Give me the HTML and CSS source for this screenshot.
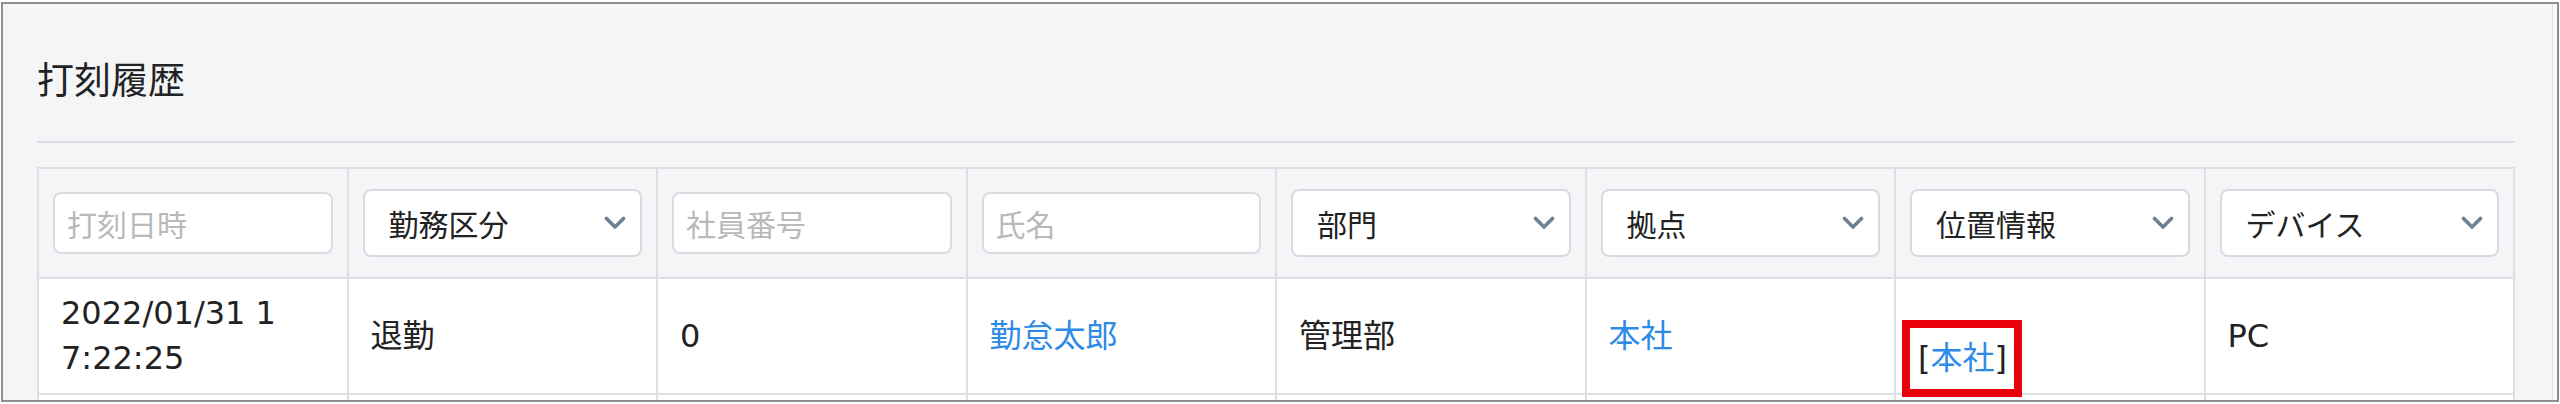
FILE: index.html
```html
<!DOCTYPE html>
<html lang="ja">
<head>
<meta charset="utf-8">
<title>打刻履歴</title>
<link rel="stylesheet" href="styles.css">
</head>
<body>
<div class="frame">
  <div class="panel">
    <div class="panel-head">
      <h2 class="title">打刻履歴</h2>
    </div>
    <table class="grid">
      <thead>
        <tr>
          <th><input class="field" type="text" placeholder="打刻日時"></th>
          <th><div class="select"><span class="select-label">勤務区分</span><svg class="chev" viewBox="0 0 22 14" width="22" height="14"><polyline points="2.5,2.5 11,11 19.5,2.5"/></svg></div></th>
          <th><input class="field" type="text" placeholder="社員番号"></th>
          <th><input class="field" type="text" placeholder="氏名"></th>
          <th><div class="select"><span class="select-label">部門</span><svg class="chev" viewBox="0 0 22 14" width="22" height="14"><polyline points="2.5,2.5 11,11 19.5,2.5"/></svg></div></th>
          <th><div class="select"><span class="select-label">拠点</span><svg class="chev" viewBox="0 0 22 14" width="22" height="14"><polyline points="2.5,2.5 11,11 19.5,2.5"/></svg></div></th>
          <th><div class="select"><span class="select-label">位置情報</span><svg class="chev" viewBox="0 0 22 14" width="22" height="14"><polyline points="2.5,2.5 11,11 19.5,2.5"/></svg></div></th>
          <th><div class="select"><span class="select-label">デバイス</span><svg class="chev" viewBox="0 0 22 14" width="22" height="14"><polyline points="2.5,2.5 11,11 19.5,2.5"/></svg></div></th>
        </tr>
      </thead>
      <tbody>
        <tr>
          <td class="dt">2022/01/31 17:22:25</td>
          <td>退勤</td>
          <td>0</td>
          <td><a class="link" href="#">勤怠太郎</a></td>
          <td>管理部</td>
          <td><a class="link" href="#">本社</a></td>
          <td class="loc"><br>[<a class="link" href="#">本社</a>]<span class="mark"></span></td>
          <td>PC</td>
        </tr>
        <tr class="next">
          <td></td><td></td><td></td><td></td><td></td><td></td><td></td><td></td>
        </tr>
      </tbody>
    </table>
  </div>
</div>
</body>
</html>
```

FILE: styles.css
```css
html, body {
  margin: 0;
  padding: 0;
  background: #ffffff;
}

body {
  font-family: "DejaVu Sans", "Noto Sans CJK JP", sans-serif;
  color: #222222;
}

.frame {
  box-sizing: border-box;
  margin: 2px 1px 0 1px;
  height: 400px;
  border: 2px solid #8f8f8f;
  background: #fafbfc;
  overflow: hidden;
}

.panel {
  box-sizing: border-box;
  height: 100%;
  margin-right: 4px;
  border-right: 1px solid #e1e4e8;
  background: #f4f5f7;
  padding: 49px 37px 0 34px;
}

.panel-head {
  padding-bottom: 38px;
  border-bottom: 2px solid #d9dde2;
  margin-bottom: 24px;
}

.title {
  margin: 0;
  font-family: "Noto Sans CJK JP", sans-serif;
  font-size: 37px;
  line-height: 50px;
  font-weight: 400;
  color: #222222;
}

.grid {
  width: 100%;
  table-layout: fixed;
  border-collapse: separate;
  border-spacing: 0;
  border-top: 2px solid #dcdfe4;
  border-left: 2px solid #dcdfe4;
}

.grid th,
.grid td {
  border-right: 2px solid #dcdfe4;
  border-bottom: 2px solid #dcdfe4;
}

.grid th {
  background: #f4f5f7;
  padding: 20px 14px;
  height: 68px;
  vertical-align: middle;
  font-weight: 400;
  text-align: left;
}

.field {
  display: block;
  box-sizing: border-box;
  width: 100%;
  height: 62px;
  margin: 0;
  padding: 0 12px;
  border: 2px solid #d9dde3;
  border-radius: 8px;
  background: #ffffff;
  font-family: "Noto Sans CJK JP", sans-serif;
  font-size: 30px;
  color: #222222;
  outline: none;
}

.field::placeholder {
  color: #b9b9b9;
}

.select {
  box-sizing: border-box;
  display: flex;
  align-items: center;
  justify-content: space-between;
  height: 68px;
  padding: 0 14px 0 24px;
  border: 2px solid #d7dbe1;
  border-radius: 8px;
  background: #ffffff;
}

.select-label {
  font-family: "Noto Sans CJK JP", sans-serif;
  font-size: 30px;
  line-height: 40px;
  color: #222222;
}

.chev {
  display: block;
  flex: none;
}

.chev polyline {
  fill: none;
  stroke: #6f8091;
  stroke-width: 3.6;
  stroke-linecap: round;
  stroke-linejoin: round;
}

.grid td {
  background: #ffffff;
  padding: 12px 24px 12px 22px;
  font-size: 32px;
  line-height: 45px;
  vertical-align: middle;
  color: #222222;
}

.grid td.dt {
  padding-right: 60px;
  word-break: break-all;
}

.grid td.loc {
  position: relative;
}

.link {
  color: #2d8ae6;
  text-decoration: none;
}

.mark {
  position: absolute;
  left: 6px;
  top: 41px;
  box-sizing: border-box;
  width: 120px;
  height: 77px;
  border: 8px solid #e8000c;
  z-index: 2;
}

.grid tr.next td {
  height: 90px;
}
```
